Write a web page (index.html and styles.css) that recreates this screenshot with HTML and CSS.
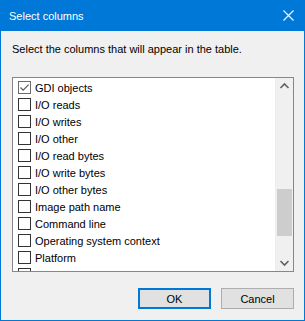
FILE: index.html
```html
<!DOCTYPE html>
<html lang="en">
<head>
  <meta charset="UTF-8" />
  <title>Select columns</title>
  <link rel="stylesheet" href="styles.css">
</head>
<body>
  <div class="window">
    <div class="titlebar">
      <span class="title">Select columns</span>
      <svg class="close" width="11" height="11" viewBox="0 0 11 11">
        <path d="M0.5 0.5 L10.5 10.5 M10.5 0.5 L0.5 10.5" stroke="#fff" stroke-width="1.1" fill="none"/>
      </svg>
    </div>

    <div class="content">
      <p class="hint">Select the columns that will appear in the table.</p>

      <div class="listbox">
        <ul class="items">
          <li><span class="box checked"><svg width="11" height="11" viewBox="0 0 11 11"><path d="M1.5 5.5 L4.2 8.2 L9.6 2.6" stroke="#5a5a5a" stroke-width="1.2" fill="none"/></svg></span>GDI objects</li>
          <li><span class="box"></span>I/O reads</li>
          <li><span class="box"></span>I/O writes</li>
          <li><span class="box"></span>I/O other</li>
          <li><span class="box"></span>I/O read bytes</li>
          <li><span class="box"></span>I/O write bytes</li>
          <li><span class="box"></span>I/O other bytes</li>
          <li><span class="box"></span>Image path name</li>
          <li><span class="box"></span>Command line</li>
          <li><span class="box"></span>Operating system context</li>
          <li><span class="box"></span>Platform</li>
          <li><span class="box"></span></li>
        </ul>
        <div class="scrollbar">
          <svg class="arrow" width="17" height="17" viewBox="0 0 17 17">
            <path d="M4.5 10 L8.5 6 L12.5 10" stroke="#606060" stroke-width="1.6" fill="none"/>
          </svg>
          <div class="track">
            <div class="thumb"></div>
          </div>
          <svg class="arrow" width="17" height="17" viewBox="0 0 17 17">
            <path d="M4.5 7 L8.5 11 L12.5 7" stroke="#606060" stroke-width="1.6" fill="none"/>
          </svg>
        </div>
      </div>

      <div class="buttons">
        <button class="btn default">OK</button>
        <button class="btn">Cancel</button>
      </div>
    </div>
  </div>
</body>
</html>
```

FILE: styles.css
```css
body {
  margin: 0;
  font-family: 'Liberation Sans', Arial, sans-serif;
  font-size: 11px;
  color: #000;
  background: #f0f0f0;
}

.window {
  box-sizing: border-box;
  width: 305px;
  height: 321px;
  border: 1px solid #0078d7;
  background: #f0f0f0;
  display: flex;
  flex-direction: column;
}

.titlebar {
  height: 30px;
  background: #0078d7;
  color: #fff;
  display: flex;
  align-items: center;
  justify-content: space-between;
  padding: 0 10px 0 8px;
}
.title {
  font-size: 11px;
  margin-top: -1px;
}
.close {
  margin-top: -1px;
}

.content {
  padding: 0 10px 0 11px;
  display: flex;
  flex-direction: column;
}

.hint {
  margin: 11px 0 0;
  line-height: 15px;
  height: 15px;
}

.listbox {
  margin-top: 20px;
  height: 195px;
  box-sizing: border-box;
  border: 1px solid #828790;
  background: #fff;
  display: flex;
}

.items {
  flex: 1;
  list-style: none;
  margin: 0;
  padding: 1px 0 0;
  overflow: hidden;
}
.items li {
  height: 17px;
  display: flex;
  align-items: center;
  padding-left: 5px;
  white-space: nowrap;
}

.box {
  box-sizing: border-box;
  width: 13px;
  height: 13px;
  border: 1px solid #333;
  background: #fff;
  margin-right: 4px;
  flex: none;
  display: flex;
}
.box.checked {
  border-color: #6b6b6b;
}

.scrollbar {
  width: 17px;
  border-left: 1px solid #e8eef7;
  background: #f0f0f0;
  display: flex;
  flex-direction: column;
}
.arrow {
  flex: none;
  display: block;
}
.track {
  flex: 1;
  padding-top: 94px;
}
.thumb {
  height: 47px;
  background: #cdcdcd;
  margin: 0 1px;
}

.buttons {
  display: flex;
  justify-content: flex-end;
  gap: 10px;
  margin-top: 16px;
}
.btn {
  box-sizing: border-box;
  width: 73px;
  height: 21px;
  font-family: 'Liberation Sans', Arial, sans-serif;
  font-size: 11px;
  background: #e1e1e1;
  border: 1px solid #adadad;
  color: #000;
  padding: 0;
}
.btn.default {
  border: 2px solid #0078d7;
}
```
